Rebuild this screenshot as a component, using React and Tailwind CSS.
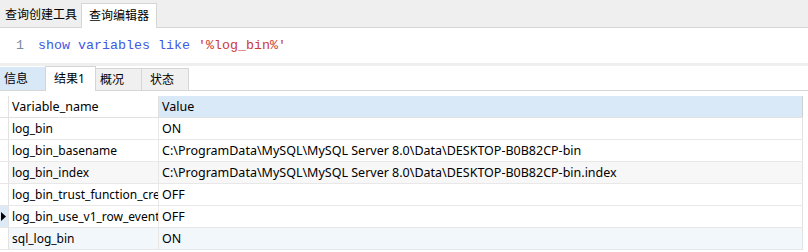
import React from 'react';

const rows = [
  { name: "log_bin", value: "ON" },
  { name: "log_bin_basename", value: "C:\\ProgramData\\MySQL\\MySQL Server 8.0\\Data\\DESKTOP-B0B82CP-bin" },
  { name: "log_bin_index", value: "C:\\ProgramData\\MySQL\\MySQL Server 8.0\\Data\\DESKTOP-B0B82CP-bin.index", bg: "bg-[#f7f7f7]" },
  { name: "log_bin_trust_function_cre", value: "OFF" },
  { name: "log_bin_use_v1_row_event", value: "OFF", current: true },
  { name: "sql_log_bin", value: "ON", bg: "bg-[#f2f7fc]" },
]

const App = () => {
  return (
    <div className="w-[808px] h-[252px] bg-white overflow-hidden text-[12px] text-black font-['Noto_Sans','Noto_Sans_CJK_SC',sans-serif]">

      {/* query tabs */}
      <div className="h-[28px] bg-[#efefef] border-b border-[#d6d6d6] flex items-end">
        <div className="h-[24px] w-[81px] flex items-center pl-[5px]">查询创建工具</div>
        <div className="h-[25px] w-[76px] -mb-px bg-white border border-b-0 border-[#d6d6d6] flex items-center pl-[7px]">查询编辑器</div>
      </div>

      {/* editor */}
      <div className="h-[35px] flex items-center font-['Liberation_Mono',monospace] text-[13.33px]">
        <span className="w-[38px] pl-[16px] text-[#7a8aa0]">1</span>
        <span className="text-[#4159e0] whitespace-pre">show variables like </span>
        <span className="text-[#cc3a36]">'%log_bin%'</span>
      </div>

      <div className="h-[3px] bg-[#efefef]" />

      {/* result tabs */}
      <div className="h-[25px] flex items-end border-b border-[#d6d6d6]">
        <div className="h-[23px] w-[45px] bg-[#d9e8f6] flex items-center pl-[4px]">信息</div>
        <div className="h-[25px] w-[51px] -mb-px bg-white border border-b-0 border-[#d6d6d6] flex items-center pl-[8px]">结果1</div>
        <div className="h-[22px] w-[46px] bg-[#f0f0f0] border-r border-t border-[#d6d6d6] flex items-center pl-[4px]">概况</div>
        <div className="h-[22px] w-[47px] bg-[#f0f0f0] border-r border-t border-[#d6d6d6] flex items-center pl-[8px]">状态</div>
      </div>

      {/* grid */}
      <div className="mt-[5px] w-[803px] text-[12.5px]">
        <div className="flex h-[22px] border-b border-[#e2e2e2]">
          <div className="w-[9px] border-r border-[#e2e2e2]" />
          <div className="w-[150px] flex items-center pt-px pl-[3px] border-r border-[#e2e2e2]">Variable_name</div>
          <div className="flex-1 flex items-center pt-px pl-[3px] bg-[#d9e9f7] border-r border-[#d0d0d0]">Value</div>
        </div>
        {rows.map(row => (
          <div key={row.name} className={`flex h-[22px] border-b border-[#e8e8e8] ${row.bg || ""}`}>
            <div className={`w-[9px] border-r border-[#e2e2e2] flex items-center ${row.current ? "bg-[#dde9f5]" : "bg-white"}`}>
              {row.current && (
                <svg width="6" height="9" viewBox="0 0 6 9" className="ml-[1px]">
                  <path d="M0 0 L5 4.5 L0 9 Z" fill="#000" />
                </svg>
              )}
            </div>
            <div className="w-[150px] flex items-center pt-px pl-[3px] text-[12px] border-r border-[#e8e8e8] overflow-hidden whitespace-nowrap">{row.name}</div>
            <div className="flex-1 flex items-center pt-px pl-[3px] border-r border-[#e2e2e2] whitespace-nowrap">{row.value}</div>
          </div>
        ))}
      </div>

    </div>
  );
};

export default App;
